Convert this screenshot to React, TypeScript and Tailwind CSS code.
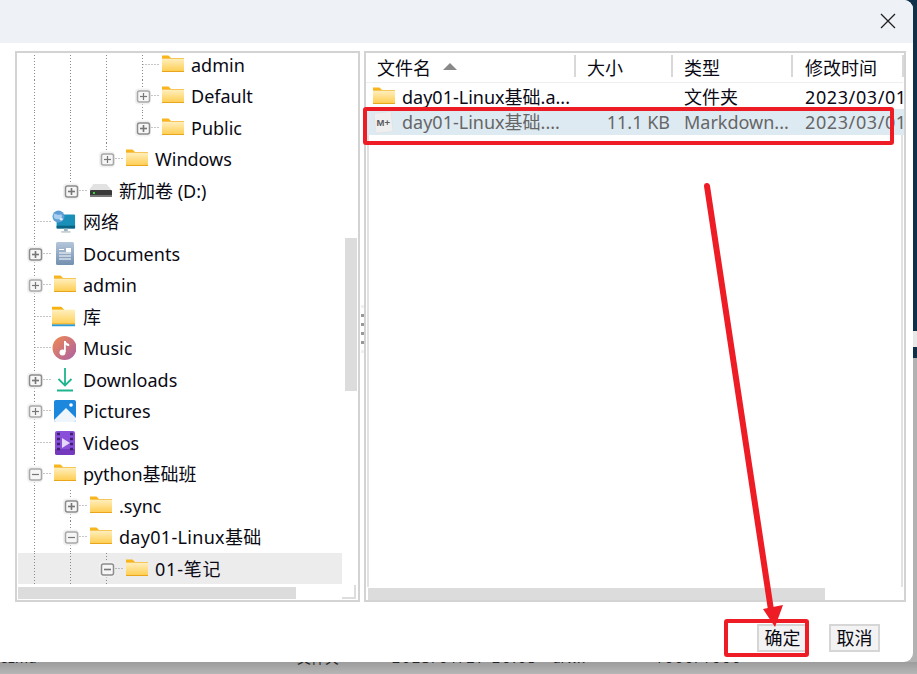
const FolderIcon = ({ id }: { id: string }) => (
  <svg width="24" height="24" viewBox="0 0 24 24">
    <defs>
      <linearGradient id={id} x1="0" y1="0" x2="0" y2="1">
        <stop offset="0" stopColor="#fff1c4" />
        <stop offset="1" stopColor="#ffcc4d" />
      </linearGradient>
    </defs>
    <path d="M2 2.500h6.500l2.500 2.500v2H2z" fill="#f8b51d" />
    <rect x="2" y="5" width="22" height="14" fill={`url(#${id})`} />
    <rect x="2" y="5" width="22" height="1" fill="#f6c65a" />
    <rect x="2" y="18" width="22" height="1" fill="#e9a61c" />
  </svg>
);

const DriveIcon = () => (
  <svg width="24" height="24" viewBox="0 0 24 24">
    <path d="M5.500 5h13l5 6H1z" fill="#e2e2e2" />
    <rect x="2" y="11" width="22" height="7" rx="1" fill="#3a3a3a" />
    <rect x="2" y="16" width="22" height="2" fill="#777" />
    <rect x="5" y="13" width="2" height="2" fill="#35d43f" />
  </svg>
);

const NetworkIcon = () => (
  <svg width="26" height="26" viewBox="0 0 26 26">
    <rect x="5" y="5" width="20" height="15" rx="1" fill="#1a8fb8" />
    <rect x="5" y="17" width="20" height="3" fill="#0c6485" />
    <rect x="13" y="20" width="4" height="3" fill="#9fb4bd" />
    <rect x="10" y="23" width="10" height="1.500" fill="#b7c4ca" />
    <circle cx="7" cy="7" r="6.500" fill="#5f9fd6" />
    <path d="M2 4c3 0 4 2 7 1s2 5-1 5-5 0-6-2z" fill="#a9d0ee" />
    <circle cx="10" cy="10" r="1.500" fill="#dcecf8" />
  </svg>
);

const DocumentsIcon = () => (
  <svg width="24" height="24" viewBox="0 0 24 24">
    <defs>
      <linearGradient id="doc" x1="0" y1="0" x2="0" y2="1">
        <stop offset="0" stopColor="#b4c6da" />
        <stop offset="1" stopColor="#7390b0" />
      </linearGradient>
    </defs>
    <rect x="4" y="0" width="18" height="23" rx="1.500" fill="url(#doc)" />
    <rect x="14" y="6" width="5" height="4" fill="#fff" />
    <path d="M7 7.500h5M7 11h12M7 14h12M7 17h12" stroke="#fff" strokeWidth="1" />
  </svg>
);

const LibraryIcon = () => (
  <svg width="26" height="24" viewBox="0 0 26 24">
    <defs>
      <linearGradient id="lib" x1="0" y1="0" x2="0" y2="1">
        <stop offset="0" stopColor="#fff0bf" />
        <stop offset="1" stopColor="#ffcf55" />
      </linearGradient>
    </defs>
    <path d="M0 1h10l3 3v3H0z" fill="#f7b20f" />
    <rect x="0" y="4" width="25" height="16" fill="url(#lib)" />
    <rect x="0" y="19" width="25" height="1" fill="#e9a61c" />
    <rect x="0" y="20" width="25" height="2" fill="#2a9bd8" />
  </svg>
);

const MusicIcon = () => (
  <svg width="24" height="24" viewBox="0 0 24 24">
    <defs>
      <linearGradient id="music" x1="0" y1="0" x2="1" y2="1">
        <stop offset="0" stopColor="#f08a4f" />
        <stop offset="1" stopColor="#aa5fa8" />
      </linearGradient>
    </defs>
    <circle cx="12.500" cy="12" r="12" fill="url(#music)" />
    <path d="M12 5h1.800c.3 2 1.500 2.500 3.400 3v2.300c-1.400-.2-2.600-.6-3.400-1.300V16h-1.800z" fill="#fff" />
    <circle cx="10.500" cy="16.500" r="3" fill="#fff" />
  </svg>
);

const DownloadsIcon = () => (
  <svg width="24" height="24" viewBox="0 0 24 24" fill="none" stroke="#1fb58f" strokeWidth="1.800">
    <path d="M13 0v17M6.500 11l6.500 6.500 6.500-6.500" />
    <path d="M5 22.500h16" strokeWidth="2" />
  </svg>
);

const PicturesIcon = () => (
  <svg width="24" height="24" viewBox="0 0 24 24">
    <rect x="2" y="1" width="22" height="22" rx="2" fill="#1b87dd" />
    <path d="M2 21 14 9l10 10v2a2 2 0 0 1-2 2H4a2 2 0 0 1-2-2z" fill="#eef6fc" />
    <circle cx="19" cy="6" r="1.800" fill="#fff" />
  </svg>
);

const VideosIcon = () => (
  <svg width="24" height="24" viewBox="0 0 24 24">
    <rect x="3" y="0" width="20" height="24" rx="2" fill="#8a4fd8" />
    <path d="M3 18h20v4a2 2 0 0 1-2 2H5a2 2 0 0 1-2-2z" fill="#7439bd" />
    <path d="M5 3h3M5 8h3M5 13h3M5 18h3M18 3h3M18 8h3M18 13h3M18 18h3" stroke="#3e2070" strokeWidth="2.500" />
    <path d="M10 7l8 5-8 5z" fill="#e4d9f8" />
  </svg>
);

const MarkdownIcon = () => (
  <svg width="24" height="24" viewBox="0 0 24 24">
    <path d="M3 3.500 20 1.500 22 21.500 5 23z" fill="#efefef" stroke="#dcdcdc" strokeWidth="0.500" />
    <text x="5.500" y="15.500" fontSize="9.500" fontWeight="700" fill="#5c5c5c" fontFamily="Liberation Sans">M+</text>
  </svg>
);

type TreeRow = {
  label: string;
  icon: React.ReactNode;
  depth: number;
  passing: number[];
  down?: boolean;
  expander?: "plus" | "minus";
  strong?: boolean;
  selected?: boolean;
  labelClass?: string;
};

const rows: TreeRow[] = [
  { label: "admin", icon: <FolderIcon id="f1" />, depth: 3, passing: [0, 1, 2], down: true },
  { label: "Default", icon: <FolderIcon id="f2" />, depth: 3, passing: [0, 1, 2], down: true, expander: "plus" },
  { label: "Public", icon: <FolderIcon id="f3" />, depth: 3, passing: [0, 1, 2], expander: "plus", strong: true },
  { label: "Windows", icon: <FolderIcon id="f4" />, depth: 2, passing: [0, 1], expander: "plus" },
  { label: "新加卷 (D:)", icon: <DriveIcon />, depth: 1, passing: [0], expander: "plus", strong: true },
  { label: "网络", icon: <NetworkIcon />, depth: 0, passing: [], down: true },
  { label: "Documents", icon: <DocumentsIcon />, depth: 0, passing: [], down: true, expander: "plus", strong: true },
  { label: "admin", icon: <FolderIcon id="f5" />, depth: 0, passing: [], down: true, expander: "plus" },
  { label: "库", icon: <LibraryIcon />, depth: 0, passing: [], down: true },
  { label: "Music", icon: <MusicIcon />, depth: 0, passing: [], down: true },
  { label: "Downloads", icon: <DownloadsIcon />, depth: 0, passing: [], down: true, expander: "plus", strong: true },
  { label: "Pictures", icon: <PicturesIcon />, depth: 0, passing: [], down: true, expander: "plus" },
  { label: "Videos", icon: <VideosIcon />, depth: 0, passing: [], down: true },
  { label: "python基础班", icon: <FolderIcon id="f6" />, depth: 0, passing: [], down: true, expander: "minus" },
  { label: ".sync", icon: <FolderIcon id="f7" />, depth: 1, passing: [0], down: true, expander: "plus", strong: true },
  { label: "day01-Linux基础", icon: <FolderIcon id="f8" />, depth: 1, passing: [0], down: true, expander: "minus", labelClass: "tracking-[0.3px]" },
  { label: "01-笔记", icon: <FolderIcon id="f9" />, depth: 2, passing: [0, 1], down: true, expander: "minus", strong: true, selected: true, labelClass: "tracking-[0.8px]" },
];

const Gutter = ({ row }: { row: TreeRow }) => {
  const width = 34 + 36 * row.depth;
  const x = 16.5 + 36 * row.depth;
  const edge = row.strong ? "#8c8c8c" : "#a8a8a8";
  return (
    <svg width={width} height="32" className="shrink-0" fill="none">
      <g stroke="#8a8a8a" strokeDasharray="1 2">
        {row.passing.map((level) => (
          <path key={level} d={`M${16.5 + 36 * level} 0v32`} />
        ))}
        <path d={`M${x} 0v${row.down ? 32 : 16}`} />
        <path d={`M${x} 15.5H${width - 1}`} />
      </g>
      {row.expander && (
        <g>
          <rect x={x - 7.5} y={8.5} width="16" height="16" rx="4" fill="#f1f1f1" />
          <rect x={x - 5} y={11} width="12" height="11" rx="2" fill="#f6f6f6" stroke={edge} strokeWidth="1.500" />
          <path d={`M${x - 2.5} 16.500h7`} stroke="#777" strokeWidth={row.strong ? 1.6 : 1.2} />
          {row.expander === "plus" && <path d={`M${x + 1} 13v7`} stroke="#777" strokeWidth={row.strong ? 1.6 : 1.2} />}
        </g>
      )}
    </svg>
  );
};

const Tree = () => (
  <div className="w-[324px] h-[531px] overflow-hidden">
    <div className="-mt-[4px] flex flex-col">
      {rows.map((row, i) => (
        <div key={i} className={`flex items-center h-[31.500px] shrink-0 ${row.selected ? "bg-[#ececec]" : ""}`}>
          <Gutter row={row} />
          <div className="w-[24px] h-[24px] shrink-0 flex items-center overflow-visible">{row.icon}</div>
          <span className={`ml-[7px] whitespace-nowrap ${row.labelClass ?? ""}`}>{row.label}</span>
        </div>
      ))}
    </div>
  </div>
);

const TreePane = () => (
  <div className="w-[345px] h-[551px] shrink-0 border-2 border-[#d3d3d3] flex flex-col">
    <div className="flex pl-px">
      <Tree />
      <div className="ml-[3px] w-[12px] h-[531px] pt-[185px]">
        <div className="h-[153px] bg-[#dcdcdc]"></div>
      </div>
    </div>
    <div className="flex pl-px pt-[3px]">
      <div className="w-[324px] h-[12px]">
        <div className="w-[278px] h-full bg-[#dcdcdc]"></div>
      </div>
      <div className="w-[14px] h-[14px] -mt-[2px] border-r-2 border-b-2 border-[#dddddd]"></div>
    </div>
  </div>
);

const FileRow = ({ icon, name, size, type, date, active }: { icon: React.ReactNode; name: string; size: string; type: string; date: string; active?: boolean }) => (
  <div className={`grid grid-cols-[209px_97px_120px_1fr] items-center whitespace-nowrap ${active ? "h-[26px] -mt-[1px] bg-[#deeaf2] text-[#666666]" : "h-[27px]"}`}>
    <div className="flex items-center pl-[5px]">
      <div className="w-[24px] h-[24px] flex items-center">{icon}</div>
      <span className="ml-[7px]">{name}</span>
    </div>
    <div className="text-right pr-[2px]">{size}</div>
    <div className="pl-[12px]">{type}</div>
    <div className="pl-[13px] w-[112px] overflow-hidden tracking-[0.6px]">{date}</div>
  </div>
);

const HeaderCell = ({ label, className, children }: { label: string; className: string; children?: React.ReactNode }) => (
  <div className={`flex items-center h-[22px] pt-[4px] border-r-2 border-[#d8d8d8] ${className}`}>
    <span>{label}</span>
    {children}
  </div>
);

const FilePane = () => (
  <div className="w-[542px] h-[551px] shrink-0 border-2 border-[#d3d3d3] flex flex-col">
    <div className="grid grid-cols-[209px_97px_120px_1fr] items-start h-[29px] pt-[2px] pl-px whitespace-nowrap">
      <HeaderCell label="文件名" className="pl-[10px]">
        <svg width="14" height="7" viewBox="0 0 14 7" className="ml-[12px] -mt-[4px]">
          <path d="M7 0l7 7H0z" fill="#888" />
        </svg>
      </HeaderCell>
      <HeaderCell label="大小" className="pl-[11px]" />
      <HeaderCell label="类型" className="pl-[11px]" />
      <HeaderCell label="修改时间" className="pl-[12px]" />
    </div>
    <div className="h-[1px] mr-px bg-[#eeeeee]"></div>
    <FileRow icon={<FolderIcon id="f10" />} name="day01-Linux基础.a..." size="" type="文件夹" date="2023/03/01" />
    <FileRow icon={<MarkdownIcon />} name="day01-Linux基础...." size="11.1 KB" type="Markdown..." date="2023/03/01" active />
    <div className="h-[452px] ml-px mr-px border-x-2 border-[#e2e2e2]"></div>
    <div className="flex pl-[2px] pr-[3px] mt-[1px]">
      <div className="w-[457px] h-[12px] bg-[#dcdcdc]"></div>
    </div>
  </div>
);

const Splitter = () => (
  <div className="w-[4px] shrink-0 flex flex-col items-center gap-[6px] pt-[254px] text-[0px]">
    <span className="w-[3px] h-[3px] bg-[#f0f0f0]"></span>
    <span className="w-[3px] h-[3px] bg-[#999999]"></span>
    <span className="w-[3px] h-[3px] bg-[#999999]"></span>
    <span className="w-[3px] h-[3px] bg-[#999999]"></span>
    <span className="w-[3px] h-[3px] bg-[#999999]"></span>
    <span className="w-[3px] h-[3px] bg-[#f0f0f0]"></span>
  </div>
);

const Dialog = () => (
  <div className="relative z-10 w-[913px] h-[662px] shrink-0 bg-white rounded-r-[9px] overflow-hidden flex flex-col text-[18px] leading-[26px] text-[#0a0a14]">
    <div className="h-[43px] bg-[#eef2f7] flex items-center justify-end pr-[17px]">
      <svg width="16" height="16" viewBox="0 0 16 16" stroke="#1f1f1f" strokeWidth="1.300" className="-mt-[2px]">
        <path d="M1 1l14 14M15 1 1 15" />
      </svg>
    </div>
    <div className="flex pl-[15px] pt-[8px]">
      <TreePane />
      <Splitter />
      <FilePane />
    </div>
    <div className="flex justify-end items-center gap-[21px] pr-[33px] pt-[22px]">
      <button className="w-[51px] h-[28px] bg-[#f3f3f3] border-2 border-[#d6d6d6] flex items-center justify-center">确定</button>
      <button className="w-[51px] h-[28px] bg-[#f3f3f3] border-2 border-[#d6d6d6] flex items-center justify-center">取消</button>
    </div>
  </div>
);

const Annotations = () => (
  <svg width="917" height="674" className="absolute left-0 top-0 z-20 pointer-events-none" fill="none" stroke="#ee1c25">
    <rect x="365" y="109" width="527" height="34" strokeWidth="4" rx="1" />
    <rect x="726" y="621" width="81" height="34" strokeWidth="4" rx="1" />
    <path d="M707 186 771 610" strokeWidth="6" strokeLinecap="round" />
    <path d="M763 609 783 605 775 627z" fill="#ee1c25" stroke="none" />
  </svg>
);

export default function App() {
  return (
    <div className="relative w-[917px] h-[674px] overflow-hidden bg-[#b2b2b2] flex flex-col font-['Noto_Sans','Noto_Sans_CJK_SC',sans-serif]">
      <div className="flex h-[662px] shrink-0">
        <Dialog />
        <div className="-ml-[9px] w-[13px] shrink-0 flex flex-col">
          <div className="h-[331px] bg-[#10304a]"></div>
          <div className="h-[16px] bg-[#e8e8e8]"></div>
          <div className="h-[11px] bg-[#10304a]"></div>
        </div>
      </div>
      <div className="h-[12px] overflow-hidden bg-linear-to-b from-[#9c9c9c] to-[#b6b6b6] text-[14px] leading-[16px] text-[#222222] whitespace-nowrap">
        <div className="-mt-[12px] flex">
          <span className="w-[297px]">ozmd</span>
          <span className="w-[95px]">文件夹</span>
          <span className="w-[160px] tracking-[2px]">2023/01/27 20:03</span>
          <span className="w-[103px]">drwx</span>
          <span className="tracking-[2px]">1000/1000</span>
        </div>
      </div>
      <Annotations />
    </div>
  );
}
